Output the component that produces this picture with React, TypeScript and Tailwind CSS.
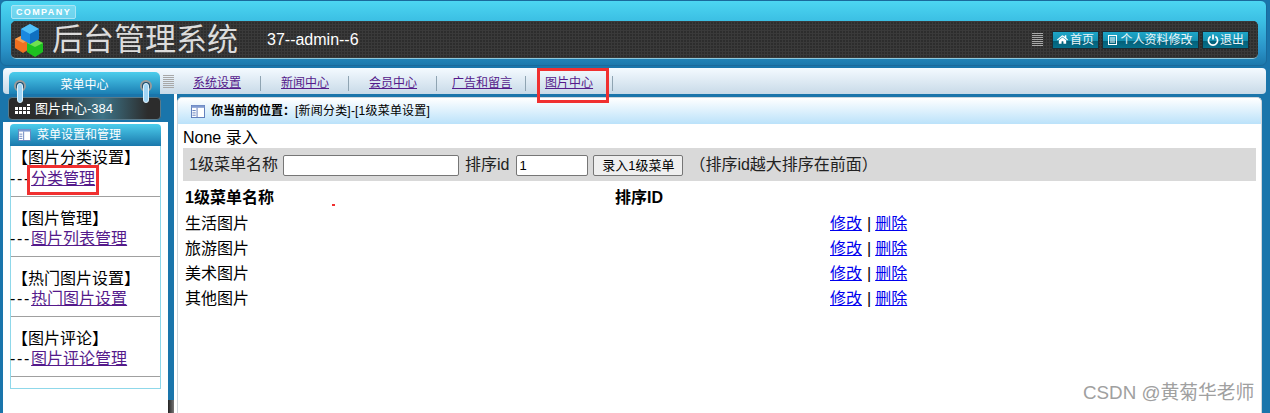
import { FaHome } from "react-icons/fa";

const font = { fontFamily: '"Liberation Sans", "Noto Sans CJK SC", sans-serif' };

const navItems = ["系统设置", "新闻中心", "会员中心"];

const sideSections = [
  { title: "【图片分类设置】", link: "分类管理" },
  { title: "【图片管理】", link: "图片列表管理" },
  { title: "【热门图片设置】", link: "热门图片设置" },
  { title: "【图片评论】", link: "图片评论管理" },
];

const rows = ["生活图片", "旅游图片", "美术图片", "其他图片"];

const Cubes = () => (
  <svg width="30" height="34" viewBox="0 0 30 34" className="shrink-0">
    <path d="M1 16l8-4 8 4v9l-8 5-8-5z" fill="#f07020" />
    <path d="M1 16l8-4 8 4-8 4z" fill="#f8a050" />
    <path d="M13 20l8-4 8 4v9l-8 5-8-5z" fill="#1cc020" />
    <path d="M13 20l8-4 8 4-8 4z" fill="#70e050" />
    <path d="M7 6l9-5 9 5v10l-9 5-9-5z" fill="#1a88e0" />
    <path d="M7 6l9-5 9 5-9 5z" fill="#50c0f8" />
    <path d="M16 11l9-5v10l-9 5z" fill="#1070c0" />
  </svg>
);

const BookIcon = ({ className }: { className: string }) => (
  <svg viewBox="0 0 15 14" className={className}>
    <rect x="0.5" y="0.5" width="14" height="13" fill="#fff" stroke="#5a78b8" />
    <rect x="0.5" y="0.5" width="14" height="2.5" fill="#7f9ad0" />
    <path d="M6.5 3v10M1.5 6h3.5M1.5 8.5h3.5M1.5 11h3.5" stroke="#5a78b8" />
  </svg>
);

const ListIcon = () => (
  <svg width="10" height="10" viewBox="0 0 10 10" className="mr-[2px]">
    <rect x="0.5" y="0.5" width="8" height="9" fill="none" stroke="#fff" />
    <path d="M2 3h5M2 5h5M2 7h5" stroke="#fff" />
  </svg>
);

const PowerIcon = () => (
  <svg width="12" height="12" viewBox="0 0 12 12" fill="none" className="mr-[1px]">
    <path d="M3.6 2.6a4.6 4.6 0 1 0 4.8 0" stroke="#fff" strokeWidth="1.7" />
    <path d="M6 0.5v5" stroke="#fff" strokeWidth="1.7" />
  </svg>
);

const Grip = ({ className }: { className: string }) => (
  <div className={`flex flex-col gap-[1px] ${className}`}>
    {Array.from({ length: 7 }).map((_, i) => (
      <div key={i} className="h-[1px] bg-[#a8a8a8]" />
    ))}
  </div>
);

const Ring = ({ className }: { className: string }) => (
  <div className={`absolute top-[80px] z-10 h-[23px] w-[12px] ${className}`}>
    <div className="absolute left-0 top-0 h-[12px] w-[12px] rounded-full border-2 border-[#9a9a9a] bg-[#1c4f70]" />
    <div className="absolute left-[3px] top-[3px] h-[20px] w-[6px] rounded-[3px] border border-[#dff2fc] bg-[#a0d4f4]" />
  </div>
);

const TopButton = ({ children, width }: { children: React.ReactNode; width: string }) => (
  <div className={`flex h-[18px] items-center justify-center border border-[#1c2c34] bg-[linear-gradient(#1ea6c8_0%,#1590b0_55%,#045f78_56%,#05708c_100%)] text-[12px] text-[#eaf6fa] ${width}`}>
    {children}
  </div>
);

export default function App() {
  return (
    <div style={font} className="relative h-[413px] w-[1270px] overflow-hidden bg-[#1a75ab] text-black">
      {/* Header */}
      <div className="mr-[3px] h-[66px] rounded-[6px] border border-[#1a6a9c] bg-[linear-gradient(#4cd6f2_0%,#3cc0e4_30%,#2a93c8_75%,#1c78ac_100%)] pl-[10px] pr-[8px] pt-[4px]">
        <div className="flex h-[14px] w-[65px] items-center justify-center rounded-[2px] border border-[#a8e4f4] bg-white/25 text-[9px] font-bold leading-none tracking-[1.4px] text-white">
          COMPANY
        </div>
        <div className="mt-[2px] flex h-[38px] items-center rounded-[5px] border-b border-[#8fc8dc] bg-[#2d2d2d] bg-[linear-gradient(#3a3a3a_1px,transparent_1px),linear-gradient(90deg,#3a3a3a_1px,transparent_1px)] bg-[length:3px_3px] pl-[3px] pr-[9px]">
          <Cubes />
          <div className="ml-[8px] text-[31px] leading-none text-[#dcdcdc]">后台管理系统</div>
          <div className="ml-[29px] text-[16px] text-white">37--admin--6</div>
          <div className="ml-auto flex items-center gap-[3px]">
            <Grip className="mr-[6px] w-[11px]" />
            <TopButton width="w-[47px]">
              <FaHome className="mr-[2px] text-[11px] text-white" />
              首页
            </TopButton>
            <TopButton width="w-[97px]">
              <ListIcon />
              个人资料修改
            </TopButton>
            <TopButton width="w-[47px]">
              <PowerIcon />
              退出
            </TopButton>
          </div>
        </div>
      </div>

      {/* Nav bar */}
      <div className="ml-[3px] mr-[4px] mt-[2px] flex h-[26px] rounded-[4px] bg-[linear-gradient(#f4faff,#c8dae8)]">
        <div className="ml-[6px] mt-[4px] flex h-[22px] w-[151px] items-center justify-center rounded-t-[5px] bg-[linear-gradient(#4ccdec,#1c7fb4)] pt-[4px] text-[12px] text-white">
          菜单中心
        </div>
        <Grip className="ml-[3px] mt-[7px] w-[11px]" />
        <div className="ml-[19px] flex items-center pt-[5px] text-[12px] text-[#551a8b]">
          {navItems.map((item) => (
            <div key={item} className="mr-[20px] flex items-center border-r border-[#8fa4b2] pr-[19px] leading-[15px]">
              <a className="underline">{item}</a>
            </div>
          ))}
          <div className="-ml-[5px] mr-[19px] flex items-center border-r border-[#8fa4b2] pr-[13px] leading-[15px]">
            <a className="underline">广告和留言</a>
          </div>
          <div className="flex items-center border-r border-[#8fa4b2] pr-[19px] leading-[15px]">
            <a className="underline">图片中心</a>
          </div>
        </div>
      </div>

      <Ring className="left-[14px]" />
      <Ring className="left-[140px]" />

      {/* Body */}
      <div className="flex h-[319px] pl-[3px] pr-[8px]">
        <aside className="w-[165px] shrink-0 bg-white">
          <div className="bg-[#1a75ab] pb-[2px] pt-[3px]">
            <div className="ml-[5px] flex h-[23px] w-[153px] items-center gap-[5px] rounded-[4px] border border-[#5a7a8a] bg-[#2c2c2c] bg-[linear-gradient(90deg,#2a2a2a_0%,#2c2c2c_25%,#3d7488_62%,#2c2c2c_92%)] pl-[6px] text-[13px] text-white">
              <div className="grid w-[15px] grid-cols-4 gap-[1px]">
                <span />
                <span />
                <span />
                <span className="h-[2px] bg-white" />
                <span className="h-[3px] bg-white" />
                <span className="h-[3px] bg-white" />
                <span className="h-[3px] bg-white" />
                <span className="h-[3px] bg-white" />
                <span className="h-[3px] bg-white" />
                <span className="h-[3px] bg-white" />
                <span className="h-[3px] bg-white" />
                <span className="h-[3px] bg-white" />
              </div>
              图片中心-384
            </div>
          </div>
          <div className="h-[2px]" />
          <div className="ml-[7px] w-[151px]">
            <div className="flex h-[22px] items-center rounded-t-[4px] bg-[linear-gradient(#4ccdec,#1a78ac)] pl-[8px] text-[12px] text-white">
              <BookIcon className="mr-[6px] h-[12px] w-[13px]" />
              菜单设置和管理
            </div>
            <div className="border-x border-b border-[#8fd8ea] pb-[11px]">
              {sideSections.map((section, i) => (
                <div key={section.title} className={`border-b-[1px] border-[#a0a0a0] text-[16px] leading-[20px] ${i === 0 ? "h-[51px] pt-[2px]" : "h-[60px] pt-[12px]"}`}>
                  <div className={`pl-[1px] ${i === 0 ? "h-[21px]" : "h-[20px]"}`}>{section.title}</div>
                  <div className="-ml-[1px]">
                    <span className="tracking-[1.7px]">---</span>
                    <a className="text-[#551a8b] underline">{section.link}</a>
                  </div>
                </div>
              ))}
            </div>
          </div>
        </aside>

        <div className="relative w-[6px] shrink-0 bg-[#1a75ab]">
          <div className="absolute bottom-0 left-0 h-[13px] w-full bg-[linear-gradient(90deg,#222,#777)]" />
        </div>

        <div className="w-[3px] shrink-0 bg-white" />

        <main className="mt-[3px] flex-1 rounded-t-[5px] border-x border-t border-[#cfd6dc] bg-white">
          <div className="flex h-[26px] items-center rounded-t-[5px] bg-[linear-gradient(#ffffff,#bbe2fa)] pl-[13px] text-[12px]">
            <BookIcon className="mr-[6px] h-[13px] w-[14px]" />
            <b>你当前的位置：</b>
            <span className="tracking-[0.2px]">[新闻分类]-[1级菜单设置]</span>
          </div>
          <div className="pl-[5px] pr-[5px]">
            <div className="mt-[3px] h-[21px] text-[16px] leading-[22px]">None 录入</div>
            <div className="flex h-[33px] items-center bg-[#d9d9d9] pl-[6px] pt-[1px] text-[16px] text-[#222]">
              1级菜单名称
              <input className="ml-[5px] h-[21px] w-[176px] rounded-[2px] border border-[#767676] bg-white" />
              <span className="ml-[6px]">排序id</span>
              <input
                readOnly
                value="1"
                className="ml-[7px] h-[21px] w-[72px] rounded-[2px] border border-[#767676] bg-white px-[2px] text-[13px] text-black"
              />
              <button className="ml-[5px] h-[21px] w-[90px] rounded-[2px] border border-[#767676] bg-[#efefef] text-[13px] text-black">
                录入1级菜单
              </button>
              <span className="ml-[6px]">（排序id越大排序在前面）</span>
            </div>
            <div className="mt-[4px] grid grid-cols-[430px_215px_1fr] grid-rows-[26px_25px_25px_25px_25px] pl-[2px] text-[16px] leading-[25px]">
              <b>1级菜单名称</b>
              <b>排序ID</b>
              <span />
              {rows.map((row) => (
                <div key={row} className="contents">
                  <span>{row}</span>
                  <span />
                  <span>
                    <a className="text-[#0000ee] underline">修改</a>
                    <span className="ml-[5px] mr-[4px]">|</span>
                    <a className="text-[#0000ee] underline">删除</a>
                  </span>
                </div>
              ))}
            </div>
          </div>
        </main>
      </div>

      {/* Red annotation boxes */}
      <div className="absolute left-[537px] top-[68px] h-[35px] w-[72px] border-[3px] border-[#f03030]" />
      <div className="absolute left-[27px] top-[165px] h-[30px] w-[72px] border-[3px] border-[#f03030]" />
      <div className="absolute left-[332px] top-[204px] h-[2px] w-[3px] bg-[#f03030]" />

      <div className="absolute left-[1083px] top-[383px] text-[18.8px] leading-[20px] text-[#a0a0a0]">CSDN @黄菊华老师</div>
    </div>
  );
}
